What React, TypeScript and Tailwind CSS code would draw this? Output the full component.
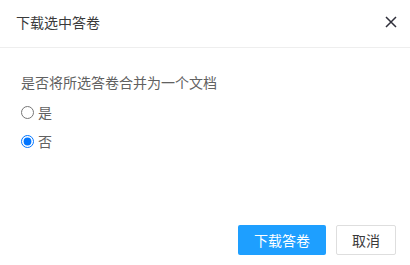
import { useState } from 'react';

export default function App() {
  const [merge, setMerge] = useState('no');

  return (
    <div
      className="w-[410px] h-[265px] bg-white flex flex-col text-[14px]"
      style={{ fontFamily: '"Noto Sans CJK SC", "Noto Sans", sans-serif' }}
    >
      {/* Header */}
      <div className="h-[48px] shrink-0 border-b border-[#eeeeee] flex items-center justify-between pl-[16px] pr-[13px]">
        <span className="text-[#3a3a3a] leading-[20px] -mt-[3px]">下载选中答卷</span>
        <svg width="12" height="12" viewBox="0 0 12 12" className="-mt-[3px]">
          <path d="M1 1L11 11M11 1L1 11" stroke="#2f2f3a" strokeWidth="1.5" />
        </svg>
      </div>

      {/* Body */}
      <div className="flex-1 pl-[21px] pt-[24px] text-[#616161]">
        <p className="leading-[20px]">是否将所选答卷合并为一个文档</p>
        <div className="mt-[10px] flex flex-col gap-[9px]">
          {[
            { v: 'yes', label: '是' },
            { v: 'no', label: '否' },
          ].map((o) => (
            <label key={o.v} className="flex items-center h-[20px] gap-[4px] cursor-pointer">
              <input
                type="radio"
                name="merge"
                checked={merge === o.v}
                onChange={() => setMerge(o.v)}
                className="m-0 w-[13px] h-[13px]"
              />
              <span className="leading-[20px]">{o.label}</span>
            </label>
          ))}
        </div>
      </div>

      {/* Footer */}
      <div className="flex justify-end gap-[10px] pr-[14px] pb-[10px]">
        <button className="h-[30px] w-[88px] rounded-[2px] bg-[#1e9fff] text-white leading-[30px]">
          下载答卷
        </button>
        <button className="h-[30px] w-[60px] rounded-[2px] border border-[#dedede] bg-white text-[#3a3a3a] leading-[28px]">
          取消
        </button>
      </div>
    </div>
  );
}
